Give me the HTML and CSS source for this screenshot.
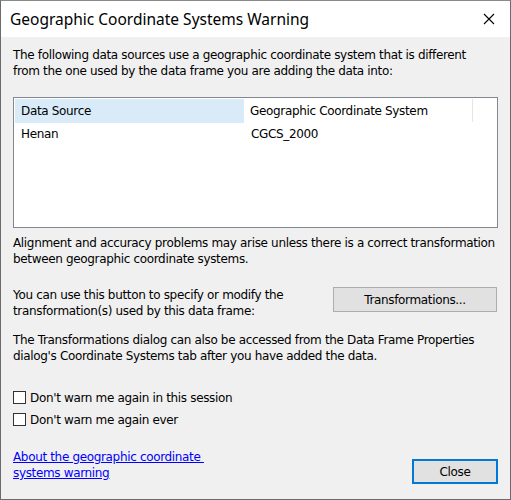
FILE: index.html
```html
<!DOCTYPE html>
<html>
<head>
<meta charset="utf-8">
<link rel="stylesheet" href="styles.css">
</head>
<body>
<div class="window">
  <div class="titlebar">
    <span class="title">Geographic Coordinate Systems Warning</span>
    <svg class="close-x" width="12" height="12" viewBox="0 0 12 12"><path d="M1 1 L11 11 M11 1 L1 11" stroke="#000" stroke-width="1.1" fill="none"/></svg>
  </div>
  <div class="content">
    <p class="para p1">The following data sources use a geographic coordinate system that is different<br>from the one used by the data frame you are adding the data into:</p>
    <div class="listbox">
      <div class="row header">
        <div class="cell c1 sel">Data Source</div>
        <div class="cell c2">Geographic Coordinate System</div>
        <div class="cell c3"></div>
      </div>
      <div class="row">
        <div class="cell c1">Henan</div>
        <div class="cell c2">CGCS_2000</div>
      </div>
    </div>
    <p class="para p2">Alignment and accuracy problems may arise unless there is a correct transformation<br>between geographic coordinate systems.</p>
    <div class="btnrow">
      <p class="para">You can use this button to specify or modify the<br>transformation(s) used by this data frame:</p>
      <button class="btn transf">Transformations...</button>
    </div>
    <p class="para p3">The Transformations dialog can also be accessed from the Data Frame Properties<br>dialog's Coordinate Systems tab after you have added the data.</p>
    <div class="checks">
      <label class="check"><span class="box"></span>Don't warn me again in this session</label>
      <label class="check"><span class="box"></span>Don't warn me again ever</label>
    </div>
    <div class="footer">
      <a class="link" href="#">About the geographic coordinate&nbsp;<br>systems warning</a>
      <button class="btn closebtn">Close</button>
    </div>
  </div>
</div>
</body>
</html>
```
FILE: styles.css
```css
html, body {
  margin: 0;
  padding: 0;
  background: #f0f0f0;
}
.window {
  width: 511px;
  height: 500px;
  box-sizing: border-box;
  border: 1px solid #6b6b6b;
  border-top-color: #8a8a8a;
  background: #f0f0f0;
  display: flex;
  flex-direction: column;
  font-family: "DejaVu Sans", Tahoma, sans-serif;
  font-size: 12px;
  letter-spacing: -0.34px;
  color: #000;
  overflow: hidden;
}
.titlebar {
  flex-shrink: 0;
  height: 36px;
  background: #fff;
  display: flex;
  align-items: center;
  justify-content: space-between;
  padding: 0 15px 0 9px;
}
.title {
  font-family: "Noto Sans", "Open Sans", sans-serif;
  font-size: 15.5px;
  letter-spacing: 0;
  color: #000;
  margin-top: -1px;
}
.close-x {
  display: block;
  margin-top: -1px;
}
.content {
  padding: 10px 12px 0 12px;
  display: flex;
  flex-direction: column;
}
.para {
  margin: 0;
  line-height: 16px;
  white-space: nowrap;
}
.listbox {
  margin-top: 18px;
  height: 131px;
  flex-shrink: 0;
  box-sizing: border-box;
  border: 1px solid #828790;
  background: #fff;
  padding: 1px;
}
.row {
  display: flex;
  height: 22px;
  align-items: center;
}
.row.header {
  height: 24px;
}
.cell {
  padding-left: 6px;
  box-sizing: border-box;
  height: 100%;
  display: flex;
  align-items: center;
}
.c1 { width: 230px; }
.c2 { width: 229px; }
.c3 { width: 24px; border-left: 1px solid #e5e5e5; height: 23px; align-self: flex-start; }
.sel { background: #d9ebf9; }
.p2 { margin-top: 7px; }
.btnrow {
  margin-top: 20px;
  display: flex;
  justify-content: space-between;
  align-items: flex-start;
}
.btn {
  font-family: "DejaVu Sans", Tahoma, sans-serif;
  font-size: 12px;
  letter-spacing: -0.34px;
  background: #e1e1e1;
  border: 1px solid #adadad;
  color: #000;
  padding: 0;
  margin: 0;
}
.transf {
  width: 164px;
  height: 25px;
  margin-top: 0px;
  margin-right: 1px;
}
.p3 { margin-top: 13px; }
.checks {
  margin-top: 27px;
  display: flex;
  flex-direction: column;
  gap: 9px;
}
.check {
  display: flex;
  align-items: center;
  height: 13px;
  gap: 4px;
  white-space: nowrap;
}
.box {
  width: 13px;
  height: 13px;
  box-sizing: border-box;
  border: 1px solid #333;
  background: #fff;
}
.footer {
  margin-top: 23px;
  display: flex;
  justify-content: space-between;
  align-items: flex-start;
}
.link {
  color: #0000ff;
  text-decoration: underline;
  line-height: 16px;
  white-space: nowrap;
}
.closebtn {
  width: 86px;
  height: 25px;
  border: 2px solid #0078d7;
  margin-top: 10px;
  margin-right: 0px;
}
```
